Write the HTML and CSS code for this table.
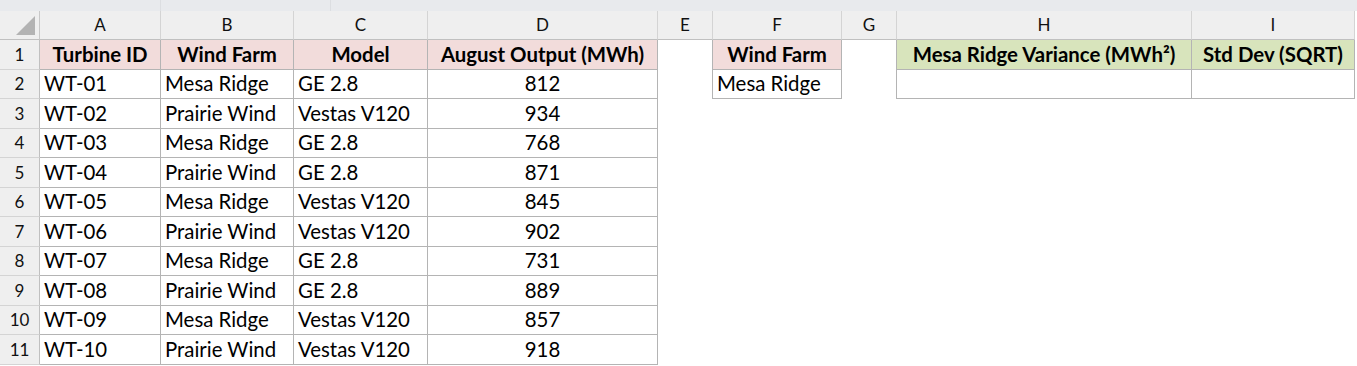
FILE: index.html
```html
<!DOCTYPE html>
<html>
<head>
<meta charset="utf-8">
<link rel="stylesheet" href="styles.css">
</head>
<body>
<div class="sheet">
  <div class="topbar"><span class="seg s1"></span><span class="seg s2"></span><span class="seg s3"></span></div>
  <div class="grid">
    <div class="corner"><span class="tri"></span></div>
    <div class="ch">A</div><div class="ch">B</div><div class="ch">C</div><div class="ch">D</div><div class="ch">E</div><div class="ch">F</div><div class="ch">G</div><div class="ch">H</div><div class="ch">I</div>

    <div class="rh">1</div>
    <div class="c b hd pink">Turbine ID</div><div class="c b hd pink">Wind Farm</div><div class="c b hd pink">Model</div><div class="c b hd pink">August Output (MWh)</div>
    <div class="c br"></div><div class="c b hd pink">Wind Farm</div><div class="c br"></div>
    <div class="c b hd green">Mesa Ridge Variance (MWh²)</div><div class="c b hd green">Std Dev (SQRT)</div>

    <div class="rh">2</div>
    <div class="c b">WT-01</div><div class="c b">Mesa Ridge</div><div class="c b">GE 2.8</div><div class="c b num">812</div>
    <div class="c br"></div><div class="c b">Mesa Ridge</div><div class="c br"></div>
    <div class="c b"></div><div class="c b"></div>

    <div class="rh">3</div>
    <div class="c b">WT-02</div><div class="c b">Prairie Wind</div><div class="c b">Vestas V120</div><div class="c b num">934</div>
    <div class="c"></div><div class="c"></div><div class="c"></div><div class="c"></div><div class="c"></div>

    <div class="rh">4</div>
    <div class="c b">WT-03</div><div class="c b">Mesa Ridge</div><div class="c b">GE 2.8</div><div class="c b num">768</div>
    <div class="c"></div><div class="c"></div><div class="c"></div><div class="c"></div><div class="c"></div>

    <div class="rh">5</div>
    <div class="c b">WT-04</div><div class="c b">Prairie Wind</div><div class="c b">GE 2.8</div><div class="c b num">871</div>
    <div class="c"></div><div class="c"></div><div class="c"></div><div class="c"></div><div class="c"></div>

    <div class="rh">6</div>
    <div class="c b">WT-05</div><div class="c b">Mesa Ridge</div><div class="c b">Vestas V120</div><div class="c b num">845</div>
    <div class="c"></div><div class="c"></div><div class="c"></div><div class="c"></div><div class="c"></div>

    <div class="rh">7</div>
    <div class="c b">WT-06</div><div class="c b">Prairie Wind</div><div class="c b">Vestas V120</div><div class="c b num">902</div>
    <div class="c"></div><div class="c"></div><div class="c"></div><div class="c"></div><div class="c"></div>

    <div class="rh">8</div>
    <div class="c b">WT-07</div><div class="c b">Mesa Ridge</div><div class="c b">GE 2.8</div><div class="c b num">731</div>
    <div class="c"></div><div class="c"></div><div class="c"></div><div class="c"></div><div class="c"></div>

    <div class="rh">9</div>
    <div class="c b">WT-08</div><div class="c b">Prairie Wind</div><div class="c b">GE 2.8</div><div class="c b num">889</div>
    <div class="c"></div><div class="c"></div><div class="c"></div><div class="c"></div><div class="c"></div>

    <div class="rh">10</div>
    <div class="c b">WT-09</div><div class="c b">Mesa Ridge</div><div class="c b">Vestas V120</div><div class="c b num">857</div>
    <div class="c"></div><div class="c"></div><div class="c"></div><div class="c"></div><div class="c"></div>

    <div class="rh">11</div>
    <div class="c b">WT-10</div><div class="c b">Prairie Wind</div><div class="c b">Vestas V120</div><div class="c b num">918</div>
    <div class="c"></div><div class="c"></div><div class="c"></div><div class="c"></div><div class="c"></div>
  </div>
</div>
</body>
</html>
```

FILE: styles.css
```css
* { box-sizing: border-box; }
html, body { margin: 0; padding: 0; background: #ffffff; }
body { font-family: Lato, "Open Sans", sans-serif; color: #000; }

.sheet { width: 1357px; height: 366px; overflow: hidden; }

.topbar {
  height: 11px;
  background: #e8eaed;
  display: flex;
}
.seg { display: block; height: 11px; }
.s1 { width: 160px; }
.s2 { width: 170px; border-left: 1px solid #dcdee1; }
.s3 { flex: 1; border-left: 1px solid #dcdee1; }

.grid {
  display: grid;
  grid-template-columns: 40px 121px 133px 134px 230px 55px 129px 55px 295px 163px;
  grid-template-rows: 29px repeat(11, 29.5px);
}

.corner {
  background: #efefef;
  border-right: 1px solid #c8c8c8;
  border-bottom: 1px solid #c0c0c0;
  position: relative;
}
.tri {
  position: absolute;
  right: 4px;
  bottom: 4px;
  width: 0;
  height: 0;
  border-style: solid;
  border-width: 0 0 19px 19px;
  border-color: transparent transparent #b3b3b3 transparent;
}

.ch {
  background: #efefef;
  border-right: 1px solid #d4d4d4;
  border-bottom: 1px solid #c0c0c0;
  font-size: 17px;
  display: flex;
  align-items: flex-end;
  justify-content: center;
  padding-bottom: 4px;
  color: #111;
}

.rh {
  background: #efefef;
  border-right: 1px solid #c0c0c0;
  border-bottom: 1px solid #d4d4d4;
  font-size: 17px;
  display: flex;
  align-items: flex-end;
  justify-content: center;
  padding-bottom: 4px;
  color: #111;
}

.c {
  font-size: 20.4px;
  display: flex;
  align-items: flex-end;
  padding: 0 4px 3px 4px;
  white-space: nowrap;
  overflow: hidden;
}
.b {
  border-right: 1px solid #b4b4b4;
  border-bottom: 1px solid #b4b4b4;
}
.br { border-right: 1px solid #b4b4b4; }

.hd { font-weight: 700; justify-content: center; }
.num { justify-content: center; }
.pink { background: #f2dcdb; }
.green { background: #d8e4bc; }
```
